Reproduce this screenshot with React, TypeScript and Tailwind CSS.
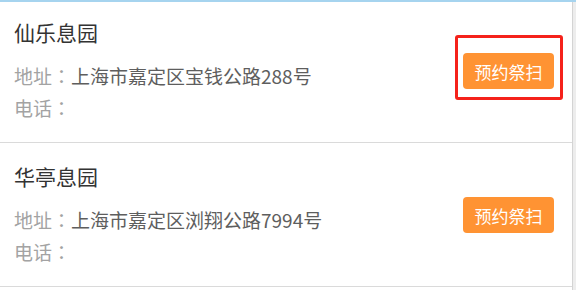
const cemeteries = [
  { name: '仙乐息园', address: '上海市嘉定区宝钱公路288号', phone: '', marked: true },
  { name: '华亭息园', address: '上海市嘉定区浏翔公路7994号', phone: '', marked: false },
];

// full-width colon, centred in its cell like the original font draws it
function Label({ text }: { text: string }) {
  return (
    <span className="text-[#a3a3a3]">
      {text}
      <span style={{ fontFamily: '"Noto Sans CJK TC", sans-serif' }}>：</span>
    </span>
  );
}

export default function App() {
  return (
    <div
      className="w-[576px] h-[290px] overflow-hidden bg-white flex flex-col"
      style={{ fontFamily: '"Noto Sans CJK SC", "Microsoft YaHei", sans-serif' }}
    >
      {/* header edge */}
      <div className="h-[2px] bg-[#a6d4ef] shrink-0" />
      <div className="flex flex-1 min-h-0">
        <div className="flex-1 flex flex-col">
          {cemeteries.map((c, i) => (
            <div
              key={c.name}
              className={`flex items-center justify-between border-b border-[#dadada] pl-[14px] pr-[18px] pb-[18px] ${
                i === 0 ? 'pt-[16px]' : 'pt-[19px]'
              }`}
            >
              <div className="flex flex-col">
                <div className="text-[21px] leading-[28px] text-[#333]">{c.name}</div>
                <div className="mt-[14px] text-[19px] leading-[32px] whitespace-nowrap">
                  <Label text="地址" />
                  <span className="text-[#5e5e5e]">{c.address}</span>
                </div>
                <div className="text-[19px] leading-[32px] whitespace-nowrap">
                  <Label text="电话" />
                  <span className="text-[#5e5e5e]">{c.phone}</span>
                </div>
              </div>
              <div className="relative">
                <button
                  type="button"
                  className="w-[91px] h-[36px] rounded-[4px] bg-[#ff9333] text-white text-[17px] leading-none flex items-center justify-center"
                >
                  预约祭扫
                </button>
                {c.marked && (
                  <div className="absolute -left-[8px] -top-[18px] -right-[9px] -bottom-[11px] border-[3px] border-[#f5221b] rounded-[3px]" />
                )}
              </div>
            </div>
          ))}
        </div>
        {/* scrollbar edge */}
        <div className="w-[4px] shrink-0 border-l border-[#d4d4d4] bg-[#ededed]" />
      </div>
    </div>
  );
}
